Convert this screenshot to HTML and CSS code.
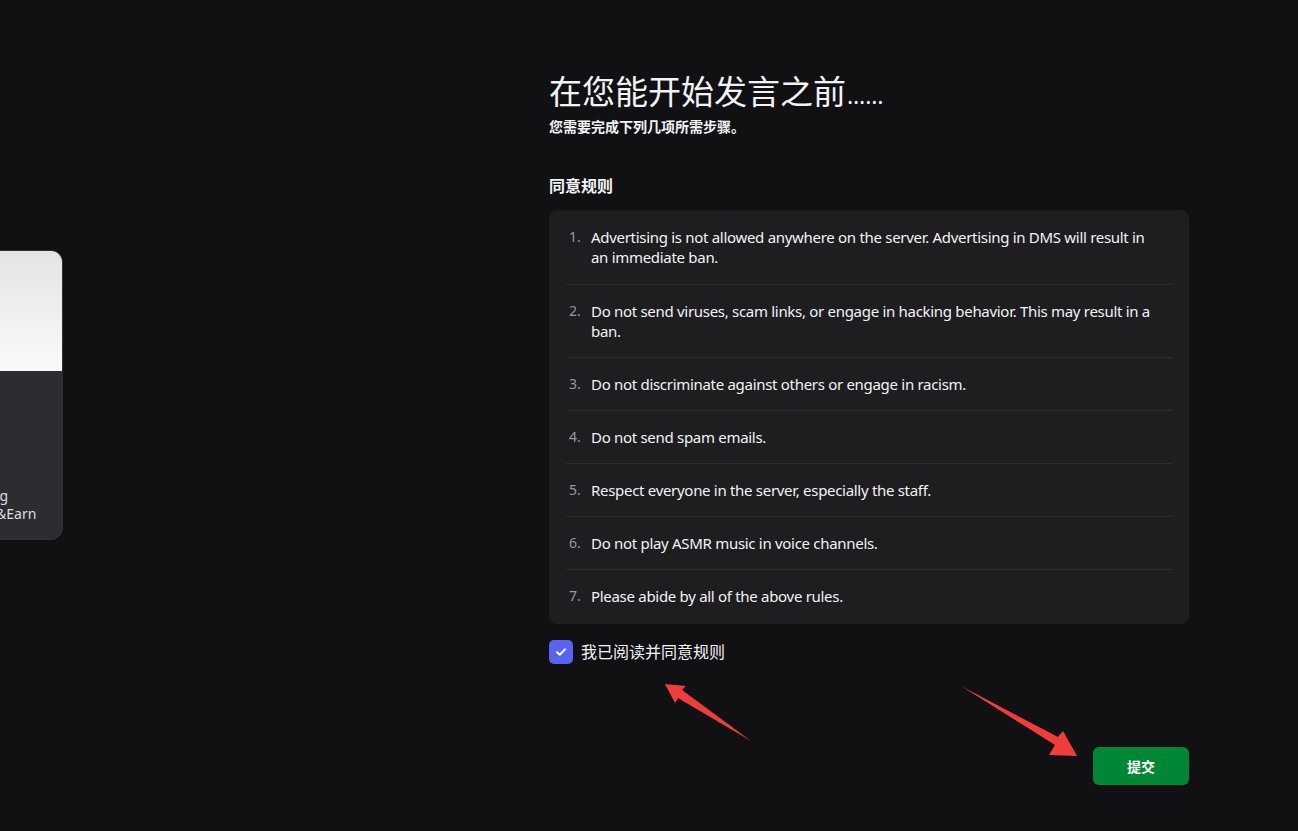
FILE: index.html
```html
<!DOCTYPE html>
<html lang="zh-CN">

<head>
    <meta charset="UTF-8">
    <meta name="viewport" content="width=device-width, initial-scale=1.0">
    <title>同意规则</title>

    <link rel="stylesheet" href="styles.css">
</head>

<body>
    <div class="page">
        <div class="side">
            <div class="card">
                <div class="card-top"></div>
                <div class="card-body">
                    <div class="card-dash">-</div>
                    <div class="card-text">ig<br>&amp;Earn</div>
                </div>
            </div>
        </div>

        <div class="main">
            <h1 class="title">在您能开始发言之前<span class="dots">……</span></h1>
            <p class="sub">您需要完成下列几项所需步骤。</p>

            <h2 class="section">同意规则</h2>
            <ol class="rules">
                <li><span class="num">1.</span><span class="txt">Advertising is not allowed anywhere on the server. Advertising in DMS will result in an immediate ban.</span></li>
                <li><span class="num">2.</span><span class="txt">Do not send viruses, scam links, or engage in hacking behavior. This may result in a ban.</span></li>
                <li><span class="num">3.</span><span class="txt">Do not discriminate against others or engage in racism.</span></li>
                <li><span class="num">4.</span><span class="txt">Do not send spam emails.</span></li>
                <li><span class="num">5.</span><span class="txt">Respect everyone in the server, especially the staff.</span></li>
                <li><span class="num">6.</span><span class="txt">Do not play ASMR music in voice channels.</span></li>
                <li><span class="num">7.</span><span class="txt">Please abide by all of the above rules.</span></li>
            </ol>

            <label class="agree">
                <span class="box">
                    <svg width="14" height="14" viewBox="0 0 14 14">
                        <path d="M3 7.2 L5.8 9.8 L11 4.4" fill="none" stroke="#fff" stroke-width="2" stroke-linecap="round" stroke-linejoin="round"/>
                    </svg>
                </span>
                <span>我已阅读并同意规则</span>
            </label>

            <div class="actions">
                <button class="submit">提交</button>
            </div>
        </div>
    </div>

    <!-- 标注箭头 -->
    <svg class="arrows" width="1298" height="831" viewBox="0 0 1298 831">
        <polygon points="665,684 686,686 682,690 751,741 678,698 675,703" fill="#f23c3c"/>
        <polygon points="961,686 1058,737 1063,731 1077,756 1049,755 1055,745" fill="#f23c3c"/>
    </svg>
</body>

</html>
```

FILE: styles.css
```css
* {
    margin: 0;
    padding: 0;
    box-sizing: border-box;
}

body {
    background-color: #111114;
    color: #f2f3f5;
    font-family: "Noto Sans", "Noto Sans CJK SC", sans-serif;
    overflow: hidden;
    height: 831px;
}

.page {
    display: flex;
    height: 831px;
}

.side {
    width: 549px;
    flex-shrink: 0;
    padding-top: 250px;
}

.card {
    width: 240px;
    height: 290px;
    margin-left: -177px;
    border-radius: 12px;
    overflow: hidden;
    border: 1px solid #303136;
    background-color: #2b2d31;
}

.card-top {
    height: 120px;
    background: linear-gradient(180deg, #e4e4e4, #fafafa);
}

.card-body {
    padding: 76px 0 0 172px;
    color: #dbdee1;
    font-size: 14px;
    line-height: 18px;
}

.card-dash {
    color: #b5bac1;
    font-size: 10px;
    line-height: 10px;
    margin-bottom: 30px;
    margin-left: -4px;
}

.main {
    width: 640px;
    padding-top: 70px;
}

.title {
    font-size: 33px;
    font-weight: 400;
    line-height: 44px;
    height: 44px;
    color: #f2f3f5;
}

.dots {
    font-size: 23px;
    line-height: 0;
    margin-left: 1px;
}

.sub {
    font-size: 14px;
    font-weight: 700;
    line-height: 18px;
    margin-top: 4px;
    color: #f2f3f5;
}

.section {
    font-size: 16px;
    font-weight: 600;
    line-height: 20px;
    margin-top: 40px;
    color: #f2f3f5;
}

.rules {
    list-style: none;
    margin-top: 14px;
    background-color: #1e1e20;
    border-radius: 8px;
    padding: 1px 17px 2px;
}

.rules li {
    display: flex;
    padding: 16px 0 16px 3px;
    border-top: 1px solid #2c2d31;
    font-size: 15px;
    line-height: 20px;
}

.rules li:first-child {
    border-top: none;
    padding-bottom: 17px;
}

.num {
    width: 22px;
    flex-shrink: 0;
    color: #949ba4;
    font-size: 14px;
}

.txt {
    color: #f2f3f5;
    letter-spacing: -0.3px;
    padding-right: 16px;
}

.agree {
    display: flex;
    align-items: center;
    gap: 8px;
    margin-top: 16px;
    font-size: 16px;
    line-height: 24px;
    color: #f2f3f5;
}

.box {
    display: flex;
    width: 24px;
    height: 24px;
    align-items: center;
    justify-content: center;
    border-radius: 5px;
    background-color: #5865f2;
}

.actions {
    display: flex;
    justify-content: flex-end;
    margin-top: 83px;
}

.submit {
    width: 96px;
    height: 38px;
    border: none;
    border-radius: 6px;
    background-color: #008736;
    color: #fff;
    font-family: "Noto Sans CJK SC", sans-serif;
    font-size: 14px;
    font-weight: 700;
}

.arrows {
    position: absolute;
    left: 0;
    top: 0;
    pointer-events: none;
}
```
